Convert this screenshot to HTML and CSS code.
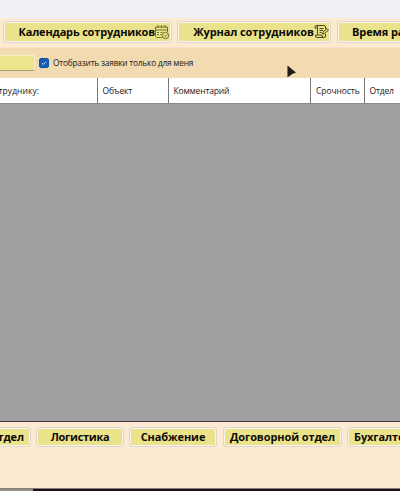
FILE: index.html
```html
<!DOCTYPE html>
<html lang="ru">
<head>
<meta charset="utf-8">
<title>Заявки</title>
<link rel="stylesheet" href="styles.css">
</head>
<body>
<div class="window">
  <div class="titlebar"></div>
  <nav class="toolbar">
    <button class="btn calendar"><span>Календарь сотрудников</span>
      <svg class="icon" viewBox="0 0 16 16"><path d="M8 13.500H2.500L1.500 12.500V3H13.500V8M1.500 6H13.500M4 1V4M7.500 1V4M11 1V4M3 8.500H5M6.500 8.500H8.500M3 10.700H5M6 10.700H7.500"/><circle cx="11.500" cy="11.500" r="3.200"/><path d="M10 11.500L11.200 12.700L13.200 10.300"/></svg>
    </button>
    <button class="btn journal"><span>Журнал сотрудников</span>
      <svg class="icon dark" viewBox="0 0 16 16"><path d="M3.500 10.500V3Q3.500 1.500 2.500 1.500Q1 1.500 1 3V4H3.500M2.500 1.500H10.500Q11.500 1.500 11.500 3V5M11.500 10V12Q11.500 13.500 10 13.500H3Q1.500 13.500 1.500 12V11H8V12Q8 13.500 9.500 13.500M5.500 4.500H9.500M5.500 6.500H9M5.500 8.500H7.500M8.500 10L9 8L13 4.500L14.500 6L10.500 9.500Z"/></svg>
    </button>
    <button class="btn time"><span>Время работы</span></button>
  </nav>
  <section class="filter">
    <div class="field"></div>
    <label class="check"><span class="box"><svg viewBox="0 0 10 10"><path d="M2.500 5.200L4.200 6.800L7.500 3.500"/></svg></span><span class="label">Отобразить заявки только для меня</span></label>
    <svg class="cursor" viewBox="0 0 12 15"><path d="M1.800 1L9.500 7.500L6.500 8.500L4.500 10L1.800 11.800Z"/></svg>
  </section>
  <div class="columns">
    <div class="col employee"><span>Сотруднику:</span></div>
    <div class="col object"><span>Объект</span></div>
    <div class="col comment"><span>Комментарий</span></div>
    <div class="col urgency"><span>Срочность</span></div>
    <div class="col dept"><span>Отдел</span></div>
  </div>
  <main class="grid"></main>
  <footer class="departments">
    <button class="btn first"><span>Отдел</span></button>
    <button class="btn logistics"><span>Логистика</span></button>
    <button class="btn supply"><span>Снабжение</span></button>
    <button class="btn contract"><span>Договорной отдел</span></button>
    <button class="btn accounts"><span>Бухгалтерия</span></button>
  </footer>
  <div class="taskbar"><div class="task"></div></div>
</div>
</body>
</html>
```
FILE: styles.css
```css
* { box-sizing: border-box; }
body { margin: 0; overflow: hidden; }
.window {
  width: 400px; height: 491px; overflow: hidden;
  display: flex; flex-direction: column;
  font-family: "Open Sans", "Noto Sans", sans-serif;
  font-size: 8.500px; color: #1c1816; background: #feead3;
}
.window > * { flex: none; }
.titlebar { height: 19px; background: linear-gradient(#f2f0f4 17px, #f8ede5); }
.toolbar { height: 29px; padding: 2px 0 0 3px; display: flex; gap: 5px; background: #fee9d1; border-bottom: 1px solid #f8e1c3; }
.btn {
  flex: none; height: 22px; padding: 0; display: flex; align-items: center;
  background: #ebe38b; border: 1px solid #d9d6d3; border-radius: 3px;
  box-shadow: inset 0 0 0 1px #faf5e8;
  font-family: "Open Sans", "Noto Sans", sans-serif; font-size: 11px; font-weight: 700;
  letter-spacing: -.1px; line-height: 14px; color: #0c0a05; white-space: nowrap; overflow: hidden;
}
.calendar { width: 169px; padding-left: 14.500px; letter-spacing: -.18px; }
.journal { width: 154px; padding-left: 15px; }
.time { width: 110px; padding-left: 14px; margin-left: 1px; }
.calendar span { width: 135.500px; }
.journal span { width: 121px; }
.icon { flex: none; width: 16px; height: 16px; fill: none; stroke: #77712e; stroke-width: 1; }
.dark { stroke: #48451f; }
.filter { height: 30px; display: flex; align-items: center; background: #f2dab1; position: relative; }
.field { width: 35px; height: 16px; background: #ede58c; border: 1px solid #f6edca; border-left: 0; border-bottom-color: #aaa079; }
.check { display: flex; align-items: center; margin-left: 4px; }
.box { width: 10px; height: 10px; border-radius: 2px; background: #145fb5; border: 1px solid #0c55a5; display: flex; }
.box svg { width: 8px; height: 8px; fill: none; stroke: #d8e8f7; stroke-width: 1.200; }
.label { margin-left: 4px; line-height: 12px; white-space: nowrap; font-size: 8.300px; letter-spacing: -.2px; }
.cursor { position: absolute; left: 286px; top: 17px; width: 12px; height: 15px; fill: #201b18; stroke: #201b18; stroke-width: .6; }
.columns { height: 26px; display: flex; background: #fff; border-bottom: 1px solid #8b898c; }
.col { flex: none; padding-left: 4.500px; display: flex; align-items: center; border-right: 1px solid #77757a; white-space: nowrap; letter-spacing: -.17px; }
.employee { width: 98px; padding: 0 58px 0 0; justify-content: flex-end; letter-spacing: .05px; }
.object { width: 71px; }
.comment { width: 142px; }
.urgency { width: 54px; letter-spacing: -.08px; padding-left: 5px; }
.dept { width: 60px; }
.grid { height: 317px; background: #a09ea1; }
.departments { height: 68px; padding-top: 5px; display: flex; gap: 5px; align-items: flex-start; border-top: 1px solid #3f3b3e; border-bottom: 1px solid #8a7c72; background: #feead3; }
.departments .btn { height: 20px; justify-content: center; }
.departments .first { width: 48px; margin-left: -17px; justify-content: flex-end; padding-right: 6px; }
.departments .logistics { width: 88px; letter-spacing: -.3px; }
.supply { width: 88px; }
.contract { width: 119px; margin-left: 1px; }
.departments .accounts { width: 100px; justify-content: flex-start; padding-left: 6px; }
.taskbar { height: 2px; background: #171217; }
.task { width: 33px; height: 2px; background: #929486; }
```
